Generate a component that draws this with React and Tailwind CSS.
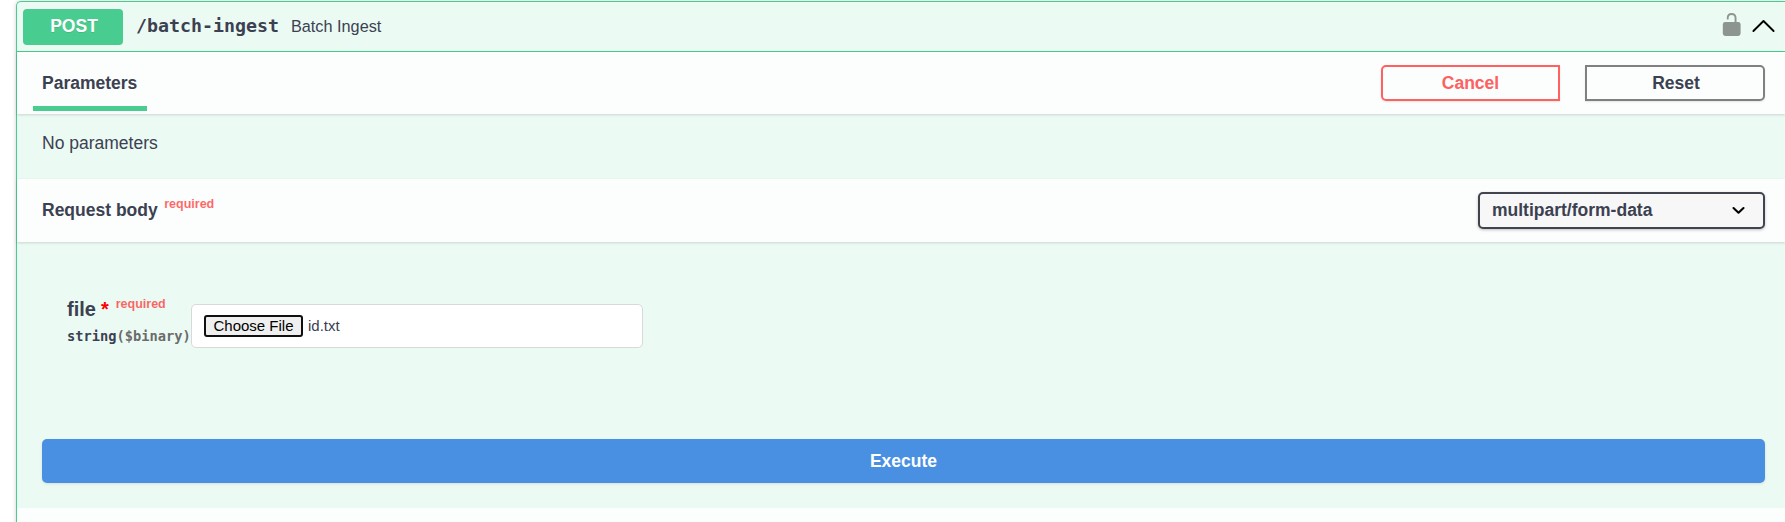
function SectionHeader({ children, className }) {
  return (
    <div className={`flex justify-between bg-white/80 pl-[25px] pr-5 shadow-[0_1.25px_2.5px_rgba(0,0,0,0.15)] ${className}`}>
      {children}
    </div>
  );
}

function OperationSummary() {
  return (
    <div className="flex h-[50px] shrink-0 items-center border-b border-[#49cc90] pl-[6px] pr-[10px] pb-px">
      <div className="mt-px flex h-9 w-[100px] items-center justify-center rounded-[4px] bg-[#49cc90] pb-px pl-[2px] text-[17.5px] font-bold text-white [text-shadow:0_1px_0_rgba(0,0,0,0.1)]">
        <span>POST</span>
      </div>
      <span className="ml-[13px] font-['DejaVu_Sans_Mono',monospace] text-[18.27px] leading-6 font-bold">/batch-ingest</span>
      <span className="ml-[12px] text-[16.25px]">Batch Ingest</span>
      <div className="ml-auto flex items-center gap-[10px]">
        <svg className="-mt-[3px] h-[25px] w-5 opacity-40" viewBox="0 0 20 25">
          <path
            fillRule="evenodd"
            d="M12.6 10V6.2C12.6 4.2 11.6 3 9.6 3S6.6 4.2 6.6 6.2V7.4H4.8V5.8C4.8 3 6.6 1 9.6 1S14.5 3 14.5 5.8V10H16.2A2.4 2.4 0 0 1 18.6 12.4V21.1A2.9 2.9 0 0 1 15.7 24H3.7A2.9 2.9 0 0 1 .8 21.1V12.4A2.4 2.4 0 0 1 3.2 10Z"
          />
        </svg>
        <svg className="-mt-px h-[14px] w-[23px]" viewBox="0 0 23 14" fill="none" stroke="#000" strokeWidth="1.9" strokeLinecap="round" strokeLinejoin="round">
          <path d="M1.4 12 11.5 2 21.6 12" />
        </svg>
      </div>
    </div>
  );
}

function ParameterRow() {
  return (
    <div className="flex h-[197px] pl-[50px] pt-[62px]">
      <div className="w-[124px]">
        <div className="-mt-[10px] flex h-[30px] items-center">
          <span className="text-[20px] font-bold">file</span>
          <span className="ml-[5px] text-[20px] leading-5 font-bold text-[#ff0000]">*</span>
          <span className="mb-[10px] ml-[7px] text-[12.5px] font-bold text-[#ff0000]/60">required</span>
        </div>
        <div className="mt-[2px] font-['DejaVu_Sans_Mono',monospace] text-[13.7px] leading-5 font-bold whitespace-nowrap">
          string<span className="text-[#6b6b6b]">($binary)</span>
        </div>
      </div>
      <div className="flex h-11 w-[452px] items-center rounded-[5px] border border-[#d9d9d9] bg-white pl-3">
        <button className="h-[22px] w-[99px] rounded-[3px] border-2 border-[#101010] bg-[#efefef] text-[15px] leading-[18px] text-black">
          Choose File
        </button>
        <span className="ml-[5px] text-[15px]">id.txt</span>
      </div>
    </div>
  );
}

export default function App() {
  return (
    <div className="h-[522px] overflow-hidden bg-white pl-4 pt-px font-['Liberation_Sans',Arial,sans-serif] text-[17.5px] text-[#3b4151]">
      <div className="flex h-[560px] flex-col rounded-tl-[5px] border border-r-0 border-[#49cc90] bg-[#49cc90]/10 shadow-[0_0_4px_rgba(0,0,0,0.19)]">
        <OperationSummary />
        <SectionHeader className="h-[62px]">
          <div className="-ml-[9px] flex h-[59px] w-[114px] flex-col border-b-[5px] border-[#49cc90] pl-[9px] pt-[20px] leading-[22px] font-bold">
            Parameters
          </div>
          <div className="flex gap-[25px] pt-[13px]">
            <button className="h-9 w-[179px] rounded-l-[5px] border-2 border-[#ff6060] font-bold text-[#ff6060] shadow-[0_1px_2px_rgba(0,0,0,0.1)]">Cancel</button>
            <button className="h-9 w-[180px] rounded-r-[5px] border-2 border-[#808080] pl-[2px] font-bold shadow-[0_1px_2px_rgba(0,0,0,0.1)]">Reset</button>
          </div>
        </SectionHeader>
        <div className="h-[65px] pl-[25px] pt-[18px] leading-[22px]">No parameters</div>
        <SectionHeader className="h-[63px]">
          <div className="flex pt-5 leading-[22px] font-bold">
            Request body
            <span className="ml-[6.5px] -mt-[6px] text-[12.5px] text-[#ff0000]/60">required</span>
          </div>
          <div className="mt-[13px] flex h-[37px] w-[287px] items-center justify-between rounded-[5px] border-2 border-[#41444e] bg-[#f7f7f7] pl-[12px] pr-[18px] pb-px font-bold shadow-[0_1px_3px_rgba(0,0,0,0.25)]">
            multipart/form-data
            <svg className="mt-px h-[9px] w-[13px]" viewBox="0 0 13 9" fill="none" stroke="#000" strokeWidth="2.1" strokeLinecap="round" strokeLinejoin="round">
              <path d="M1.5 2 6.5 6.7 11.5 2" />
            </svg>
          </div>
        </SectionHeader>
        <ParameterRow />
        <div className="h-[69px] pl-[25px] pr-5">
          <button className="h-11 w-full rounded-[5px] bg-[#4990e2] pt-px font-bold text-white shadow-[0_1px_3px_rgba(0,0,0,0.1)]">Execute</button>
        </div>
        <div className="grow bg-white/80" />
      </div>
    </div>
  );
}
